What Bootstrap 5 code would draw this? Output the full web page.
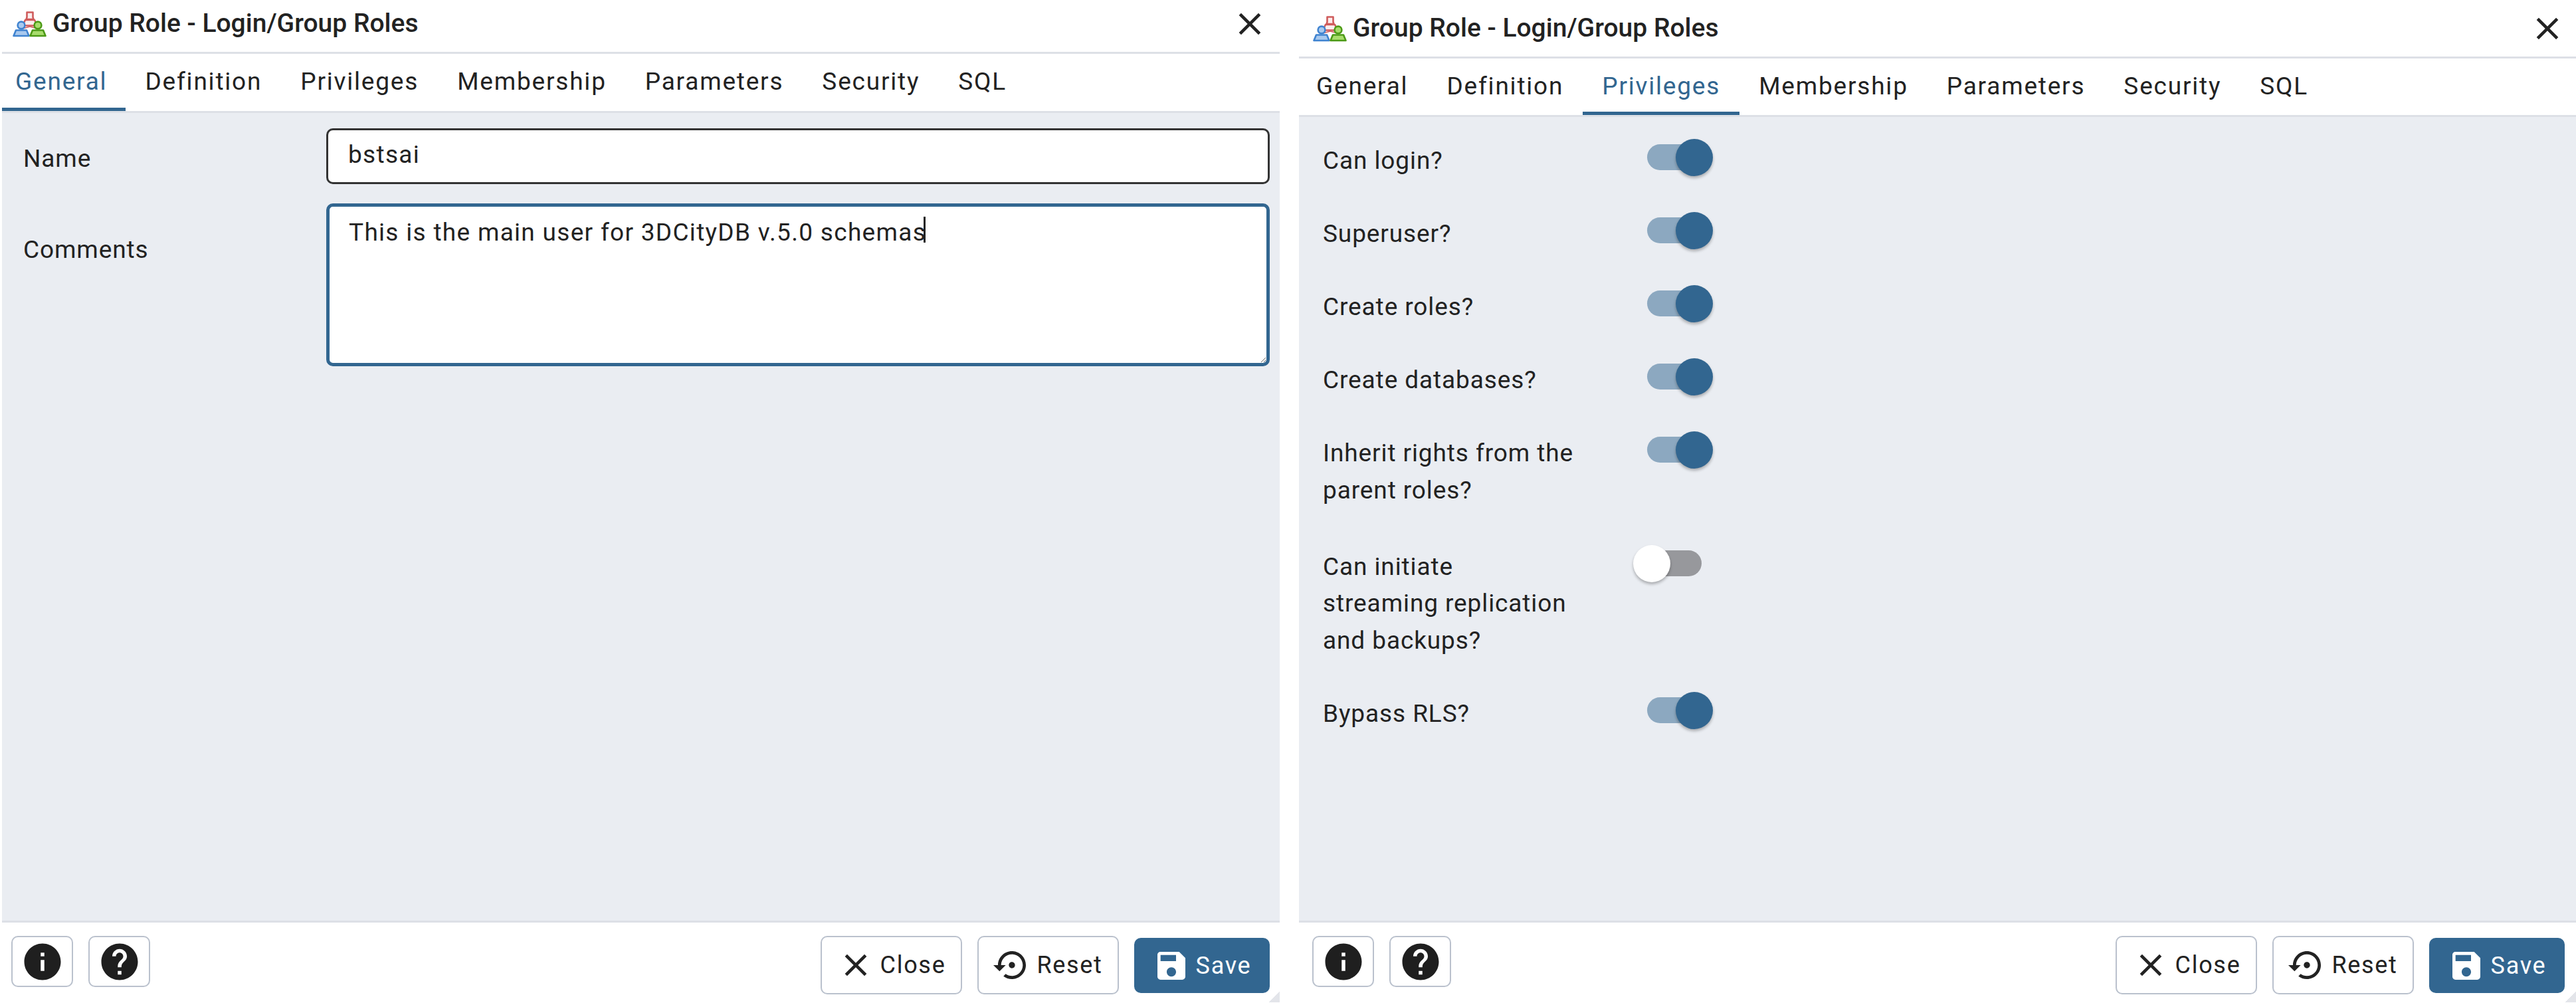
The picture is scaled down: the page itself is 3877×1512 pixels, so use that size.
<!doctype html>
<html lang="en">
<head>
<meta charset="utf-8">
<title>Group Role - Login/Group Roles</title>
<link href="https://cdn.jsdelivr.net/npm/bootstrap@5.3.0/dist/css/bootstrap.min.css" rel="stylesheet">
<style>
:root{--pg-blue:#326690;--pg-line:#dde0e6;--pg-bg:#eaedf2;--pg-ink:#222;--pg-btn:#bac1cd}
html,body{height:100%}
body{background:#fff;overflow:hidden;font-family:Roboto,"Liberation Sans",sans-serif;color:var(--pg-ink);font-size:37px;letter-spacing:.9px}
.stage{height:1512px;width:3877px}
.dlg{height:1512px;position:relative;flex:none}
.dlg-a{width:1923px;margin-left:3px}
.dlg-b{width:1922px;margin-left:29px}
.dlg-head{border-bottom:3px solid var(--pg-line);padding-left:16px;padding-right:29px;flex:none}
.dlg-a .dlg-head{height:81px;padding-bottom:7px}
.dlg-b .dlg-head{height:88px;padding-left:21px;padding-right:27px}
.dlg-title{font-weight:500;font-size:39px;letter-spacing:0;margin-left:8px;line-height:1}
.logo{width:52px;height:40px;flex:none}
.x-icon{width:56px;height:56px;fill:#222;margin-right:-12px}
.tabbar{flex:none;background:#fff;border-bottom:3px solid var(--pg-line);flex-wrap:nowrap}
.dlg-a .tabbar{height:89px}
.dlg-b .tabbar{height:88px}
.tabbar .nav-link{height:100%;padding:3px 29px 0;color:var(--pg-ink);letter-spacing:1.8px;border-bottom:5px solid transparent;display:flex;align-items:center;border-radius:0;background:none}
.tabbar .nav-link.active{color:var(--pg-blue);border-bottom-color:var(--pg-blue)}
.dlg-a .tabbar .nav-item:first-child .nav-link{padding-left:20px;padding-right:28px}
.dlg-b .tabbar .nav-item:first-child .nav-link{padding-left:26px}
.dlg-body{flex:1 1 auto;background:var(--pg-bg);min-height:0}
.dlg-a .dlg-body{padding:23px 15px 0 32px}
.dlg-b .dlg-body{padding:33px 0 0 36px}
.fld-label{width:456px;flex:none;line-height:1.5}
.fld-name{height:84px;border:3px solid #333;border-radius:10px;padding:0 30px 6px;font-size:37px;color:var(--pg-ink);letter-spacing:1.3px;background:#fff}
.fld-area{height:245px;border:5px solid var(--pg-blue);border-radius:10px;padding:11px 29px;font-size:37px;line-height:1.5;color:var(--pg-ink);letter-spacing:1.3px;resize:both;background:#fff;box-shadow:none}
.fld-wrap{position:relative;flex:1 1 auto;min-width:0}
.caret-bar{position:absolute;left:899px;top:20px;width:3px;height:39px;background:#222}
.lbl-row-a{margin-bottom:29px}
.lbl-row-a .lbl-1{padding-top:18px}
.lbl-2{padding-top:42px}
.priv-list{row-gap:49.500px}
.priv-row{min-height:56px}
.priv-tall{padding-bottom:5px}
.priv-text{width:430px;flex:none;line-height:55.5px;margin-top:5px}
.tgl{position:relative;width:100px;height:56px;padding:0;margin:0;min-height:0;flex:none;margin-left:58px}
.tgl .form-check-input{position:absolute;left:0;top:8px;width:87px;height:39px;margin:0;border:0;border-radius:20px;background-image:none;background-color:#8ca8c0;box-shadow:none;float:none}
.tgl .tgl-dot{position:absolute;left:43px;top:0;width:56px;height:56px;border-radius:50%;background:var(--pg-blue);box-shadow:0 3px 4px rgba(0,0,0,.28)}
.tgl.off .form-check-input{left:0;background-color:#97989c;width:82px}
.tgl.off .tgl-dot{left:-21px;background:#fff}
.dlg-foot{flex:none;height:127px;border-top:3px solid var(--pg-line);position:relative;padding-top:20px;padding-right:15px}
.dlg-a .dlg-foot{padding-left:14px}
.dlg-b .dlg-foot{padding-left:20px;padding-right:17px}
.sq-btn{width:93px;height:77px;padding:0;border:2px solid var(--pg-btn);border-radius:10px;background:#fff}
.sq-btn svg{width:66px;height:66px;fill:#1f1f1f;display:block;margin:auto}
.act-btn{width:213px;height:88px;padding:0;border:2px solid var(--pg-btn);border-radius:10px;background:#fff;color:var(--pg-ink);font-size:36px;letter-spacing:1.700px;gap:9px}
.act-btn svg{width:56px;height:56px;fill:#222;flex:none}
.save-btn{width:204px;height:83px;margin-top:3px;margin-bottom:2px;border:0;background:var(--pg-blue);color:#fff}
.save-btn svg{fill:#fff}
.foot-gap{gap:23px}
.corner{position:absolute;right:0;bottom:4px;width:16px;height:16px;background:linear-gradient(135deg,transparent 50%,#e3e5ea 50%)}
</style>
</head>
<body>
<div class="stage d-flex">

  <section class="dlg dlg-a d-flex flex-column">
    <header class="dlg-head d-flex align-items-center">
      <svg class="logo" viewBox="0 0 52 40"><use href="#grp"/></svg>
      <span class="dlg-title flex-grow-1">Group Role - Login/Group Roles</span>
      <svg class="x-icon" viewBox="0 0 24 24"><path d="M19 6.41L17.59 5 12 10.59 6.41 5 5 6.41 10.59 12 5 17.59 6.41 19 12 13.41 17.59 19 19 17.59 13.41 12z"/></svg>
    </header>
    <ul class="nav tabbar">
      <li class="nav-item"><a class="nav-link active" href="#">General</a></li>
      <li class="nav-item"><a class="nav-link" href="#">Definition</a></li>
      <li class="nav-item"><a class="nav-link" href="#">Privileges</a></li>
      <li class="nav-item"><a class="nav-link" href="#">Membership</a></li>
      <li class="nav-item"><a class="nav-link" href="#">Parameters</a></li>
      <li class="nav-item"><a class="nav-link" href="#">Security</a></li>
      <li class="nav-item"><a class="nav-link" href="#">SQL</a></li>
    </ul>
    <main class="dlg-body">
      <div class="d-flex lbl-row-a">
        <label class="fld-label lbl-1">Name</label>
        <div class="fld-wrap"><input class="form-control fld-name" value="bstsai"></div>
      </div>
      <div class="d-flex">
        <label class="fld-label lbl-2">Comments</label>
        <div class="fld-wrap">
          <textarea class="form-control fld-area">This is the main user for 3DCityDB v.5.0 schemas</textarea>
          <span class="caret-bar"></span>
        </div>
      </div>
    </main>
    <footer class="dlg-foot d-flex align-items-start justify-content-between">
      <div class="d-flex foot-gap">
        <button class="btn sq-btn" type="button" aria-label="Info"><svg viewBox="0 0 24 24"><path d="M12 2C6.48 2 2 6.48 2 12s4.48 10 10 10 10-4.48 10-10S17.52 2 12 2zm1 15h-2v-6h2v6zm0-8h-2V7h2v2z"/></svg></button>
        <button class="btn sq-btn" type="button" aria-label="Help"><svg viewBox="0 0 24 24"><path d="M12 2C6.48 2 2 6.48 2 12s4.48 10 10 10 10-4.48 10-10S17.52 2 12 2zm1 17h-2v-2h2v2zm2.07-7.75l-.9.92C13.45 12.9 13 13.5 13 15h-2v-.5c0-1.1.45-2.1 1.17-2.83l1.24-1.26c.37-.36.59-.86.59-1.41 0-1.1-.9-2-2-2s-2 .9-2 2H8c0-2.21 1.79-4 4-4s4 1.79 4 4c0 .88-.36 1.68-.93 2.25z"/></svg></button>
      </div>
      <div class="d-flex foot-gap">
        <button class="btn act-btn d-flex align-items-center justify-content-center" type="button"><svg viewBox="0 0 24 24"><path d="M19 6.41L17.59 5 12 10.59 6.41 5 5 6.41 10.59 12 5 17.59 6.41 19 12 13.41 17.59 19 19 17.59 13.41 12z"/></svg>Close</button>
        <button class="btn act-btn d-flex align-items-center justify-content-center" type="button"><svg viewBox="0 0 24 24"><path d="M14 12c0-1.1-.9-2-2-2s-2 .9-2 2 .9 2 2 2 2-.9 2-2zm-2-9c-4.97 0-9 4.03-9 9H0l4 4 4-4H5c0-3.87 3.13-7 7-7s7 3.13 7 7-3.13 7-7 7c-1.51 0-2.91-.49-4.06-1.3l-1.42 1.44C8.04 20.3 9.94 21 12 21c4.97 0 9-4.03 9-9s-4.03-9-9-9z"/></svg>Reset</button>
        <button class="btn act-btn save-btn d-flex align-items-center justify-content-center" type="button"><svg viewBox="0 0 24 24"><path d="M17 3H5c-1.11 0-2 .9-2 2v14c0 1.1.89 2 2 2h14c1.1 0 2-.9 2-2V7l-4-4zm-5 16c-1.66 0-3-1.34-3-3s1.34-3 3-3 3 1.34 3 3-1.34 3-3 3zm3-10H5V5h10v4z"/></svg>Save</button>
      </div>
      <span class="corner"></span>
    </footer>
  </section>

  <section class="dlg dlg-b d-flex flex-column">
    <header class="dlg-head d-flex align-items-center">
      <svg class="logo" viewBox="0 0 52 40"><use href="#grp"/></svg>
      <span class="dlg-title flex-grow-1">Group Role - Login/Group Roles</span>
      <svg class="x-icon" viewBox="0 0 24 24"><path d="M19 6.41L17.59 5 12 10.59 6.41 5 5 6.41 10.59 12 5 17.59 6.41 19 12 13.41 17.59 19 19 17.59 13.41 12z"/></svg>
    </header>
    <ul class="nav tabbar">
      <li class="nav-item"><a class="nav-link" href="#">General</a></li>
      <li class="nav-item"><a class="nav-link" href="#">Definition</a></li>
      <li class="nav-item"><a class="nav-link active" href="#">Privileges</a></li>
      <li class="nav-item"><a class="nav-link" href="#">Membership</a></li>
      <li class="nav-item"><a class="nav-link" href="#">Parameters</a></li>
      <li class="nav-item"><a class="nav-link" href="#">Security</a></li>
      <li class="nav-item"><a class="nav-link" href="#">SQL</a></li>
    </ul>
    <main class="dlg-body">
      <div class="priv-list d-flex flex-column">
        <div class="priv-row d-flex align-items-start"><div class="priv-text">Can login?</div><div class="form-check form-switch tgl"><input class="form-check-input" type="checkbox" role="switch" checked aria-label="Can login?"><span class="tgl-dot"></span></div></div>
        <div class="priv-row d-flex align-items-start"><div class="priv-text">Superuser?</div><div class="form-check form-switch tgl"><input class="form-check-input" type="checkbox" role="switch" checked aria-label="Superuser?"><span class="tgl-dot"></span></div></div>
        <div class="priv-row d-flex align-items-start"><div class="priv-text">Create roles?</div><div class="form-check form-switch tgl"><input class="form-check-input" type="checkbox" role="switch" checked aria-label="Create roles?"><span class="tgl-dot"></span></div></div>
        <div class="priv-row d-flex align-items-start"><div class="priv-text">Create databases?</div><div class="form-check form-switch tgl"><input class="form-check-input" type="checkbox" role="switch" checked aria-label="Create databases?"><span class="tgl-dot"></span></div></div>
        <div class="priv-row priv-tall d-flex align-items-start"><div class="priv-text">Inherit rights from the parent roles?</div><div class="form-check form-switch tgl"><input class="form-check-input" type="checkbox" role="switch" checked aria-label="Inherit rights"><span class="tgl-dot"></span></div></div>
        <div class="priv-row d-flex align-items-start"><div class="priv-text">Can initiate<br>streaming replication<br>and backups?</div><div class="form-check form-switch tgl off"><input class="form-check-input" type="checkbox" role="switch" aria-label="Can initiate streaming replication"><span class="tgl-dot"></span></div></div>
        <div class="priv-row d-flex align-items-start"><div class="priv-text">Bypass RLS?</div><div class="form-check form-switch tgl"><input class="form-check-input" type="checkbox" role="switch" checked aria-label="Bypass RLS?"><span class="tgl-dot"></span></div></div>
      </div>
    </main>
    <footer class="dlg-foot d-flex align-items-start justify-content-between">
      <div class="d-flex foot-gap">
        <button class="btn sq-btn" type="button" aria-label="Info"><svg viewBox="0 0 24 24"><path d="M12 2C6.48 2 2 6.48 2 12s4.48 10 10 10 10-4.48 10-10S17.52 2 12 2zm1 15h-2v-6h2v6zm0-8h-2V7h2v2z"/></svg></button>
        <button class="btn sq-btn" type="button" aria-label="Help"><svg viewBox="0 0 24 24"><path d="M12 2C6.48 2 2 6.48 2 12s4.48 10 10 10 10-4.48 10-10S17.52 2 12 2zm1 17h-2v-2h2v2zm2.07-7.75l-.9.92C13.45 12.9 13 13.5 13 15h-2v-.5c0-1.1.45-2.1 1.17-2.83l1.24-1.26c.37-.36.59-.86.59-1.41 0-1.1-.9-2-2-2s-2 .9-2 2H8c0-2.21 1.79-4 4-4s4 1.79 4 4c0 .88-.36 1.68-.93 2.25z"/></svg></button>
      </div>
      <div class="d-flex foot-gap">
        <button class="btn act-btn d-flex align-items-center justify-content-center" type="button"><svg viewBox="0 0 24 24"><path d="M19 6.41L17.59 5 12 10.59 6.41 5 5 6.41 10.59 12 5 17.59 6.41 19 12 13.41 17.59 19 19 17.59 13.41 12z"/></svg>Close</button>
        <button class="btn act-btn d-flex align-items-center justify-content-center" type="button"><svg viewBox="0 0 24 24"><path d="M14 12c0-1.1-.9-2-2-2s-2 .9-2 2 .9 2 2 2 2-.9 2-2zm-2-9c-4.97 0-9 4.03-9 9H0l4 4 4-4H5c0-3.87 3.13-7 7-7s7 3.13 7 7-3.13 7-7 7c-1.51 0-2.91-.49-4.06-1.3l-1.42 1.44C8.04 20.3 9.94 21 12 21c4.97 0 9-4.03 9-9s-4.03-9-9-9z"/></svg>Reset</button>
        <button class="btn act-btn save-btn d-flex align-items-center justify-content-center" type="button"><svg viewBox="0 0 24 24"><path d="M17 3H5c-1.11 0-2 .9-2 2v14c0 1.1.89 2 2 2h14c1.1 0 2-.9 2-2V7l-4-4zm-5 16c-1.66 0-3-1.34-3-3s1.34-3 3-3 3 1.34 3 3-1.34 3-3 3zm3-10H5V5h10v4z"/></svg>Save</button>
      </div>
      <span class="corner"></span>
    </footer>
  </section>
</div>

<svg width="0" height="0" class="d-block" aria-hidden="true">
  <defs>
    <g id="grp" stroke-linejoin="round">
      <path d="M26 24 15 27M26 24 37 27" fill="none" stroke="#cf5b5b" stroke-width="1.5"/>
      <g fill="#fbeeee" stroke="#cf5b5b" stroke-width="2.6">
        <path d="M21.500 2.500h9v7.500l1 3h-11l1-3z"/>
        <path d="M15 22.500 19 14h14l4 8.500z"/>
      </g>
      <g fill="#a9c9ee" stroke="#3f83d0" stroke-width="2.600">
        <circle cx="13" cy="22" r="5.400"/>
        <path d="M1.500 38 5 29.500h16L24.500 38z"/>
      </g>
      <g fill="#a8dc6c" stroke="#4c9a16" stroke-width="2.600">
        <circle cx="38" cy="22" r="5.400"/>
        <path d="M26.500 38 30 29.500h16L49.500 38z"/>
      </g>
    </g>
  </defs>
</svg>
<script src="https://cdn.jsdelivr.net/npm/bootstrap@5.3.0/dist/js/bootstrap.bundle.min.js"></script>
</body>
</html>
